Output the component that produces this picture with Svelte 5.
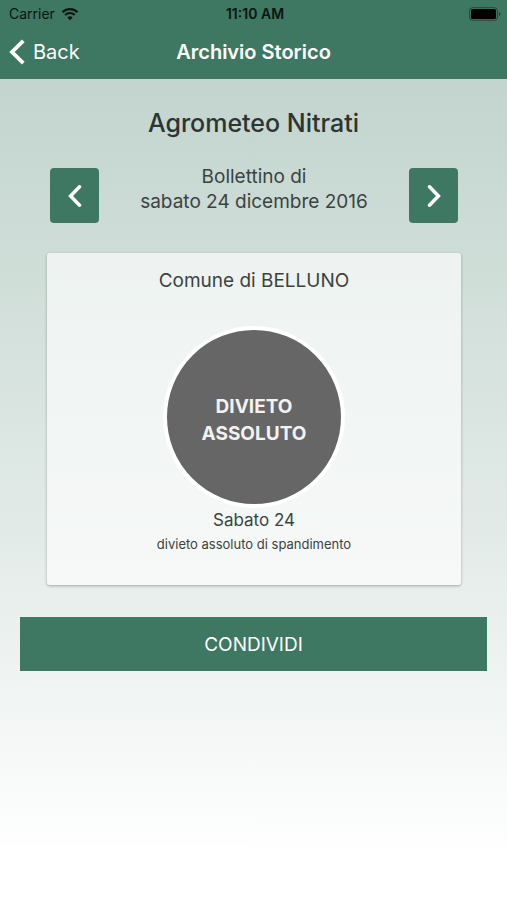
<script lang="ts">
interface Bulletin {
	date: string;
	town: string;
	status: string[];
	day: string;
	note: string;
}

const bulletin: Bulletin = {
	date: 'sabato 24 dicembre 2016',
	town: 'BELLUNO',
	status: ['DIVIETO', 'ASSOLUTO'],
	day: 'Sabato 24',
	note: 'divieto assoluto di spandimento'
};
</script>

<div class="screen">
	<header>
		<div class="status-bar">
			<span class="carrier">
				Carrier
				<svg width="18" height="14" viewBox="0 0 18 14" fill="none" aria-hidden="true">
					<path d="M1.5 5.2a10.6 10.6 0 0 1 15 0" stroke="currentColor" stroke-width="2.3" />
					<path d="M4.2 8a6.8 6.8 0 0 1 9.6 0" stroke="currentColor" stroke-width="2.2" />
					<path d="M9 13.2 6.4 10.5a3.7 3.7 0 0 1 5.2 0z" fill="currentColor" />
				</svg>
			</span>
			<span class="clock">11:10 AM</span>
			<svg class="battery" width="32" height="14" viewBox="0 0 32 14" aria-hidden="true">
				<rect x=".6" y=".7" width="27.8" height="12.6" rx="3" fill="none" stroke="#000" stroke-opacity=".4" />
				<rect x="2" y="2" width="25" height="10" rx="1.6" fill="#000" />
				<path d="M30 5v4q1.3-.7 1.3-2T30 5z" fill="#000" fill-opacity=".5" />
			</svg>
		</div>
		<nav>
			<a class="back" href="#back">
				<svg width="16" height="26" viewBox="0 0 16 26" fill="none" aria-hidden="true">
					<path d="M14.3 1.8 3 13l11.3 11.2" stroke="currentColor" stroke-width="3.8" />
				</svg>
				Back
			</a>
			<span class="nav-title">Archivio Storico</span>
		</nav>
	</header>

	<main>
		<h1>Agrometeo Nitrati</h1>

		<div class="picker">
			<button class="arrow" aria-label="Giorno precedente">
				<svg width="14" height="22" viewBox="0 0 14 22" fill="none" aria-hidden="true">
					<path d="M11.5 1.8 2.6 11l8.9 9.2" stroke="currentColor" stroke-width="3.5" stroke-linecap="round" />
				</svg>
			</button>
			<p>Bollettino di<br />{bulletin.date}</p>
			<button class="arrow" aria-label="Giorno successivo">
				<svg width="14" height="22" viewBox="0 0 14 22" fill="none" aria-hidden="true">
					<path d="m2.5 1.8 8.9 9.2-8.9 9.2" stroke="currentColor" stroke-width="3.5" stroke-linecap="round" />
				</svg>
			</button>
		</div>

		<section class="card">
			<h2>Comune di {bulletin.town}</h2>
			<div class="circle">
				{#each bulletin.status as line (line)}
					<span>{line}</span>
				{/each}
			</div>
			<p class="day">{bulletin.day}</p>
			<p class="note">{bulletin.note}</p>
		</section>

		<button class="share">CONDIVIDI</button>
	</main>
</div>

<style>
	:global(body) {
		margin: 0;
	}
	.screen {
		--green: #3e7762;
		box-sizing: border-box;
		min-height: 100vh;
		background: linear-gradient(#becfc9, #cddcd6 26%, #e3ebe8 60%, #fff 95%);
		color: #3b4341;
		font-family: Inter, Roboto, sans-serif;
	}
	header {
		background: var(--green);
	}
	.status-bar {
		display: grid;
		grid-template-columns: 1fr auto 1fr;
		align-items: center;
		height: 27px;
		padding: 0 6px 0 9px;
		color: #0b1511;
		font-size: 14px;
	}
	.carrier {
		display: flex;
		align-items: center;
		gap: 6px;
	}
	.clock {
		font-weight: 600;
	}
	.battery {
		justify-self: end;
	}
	nav {
		display: grid;
		grid-template-columns: 1fr auto 1fr;
		align-items: center;
		height: 50px;
		padding: 0 9px 2px;
		color: #fff;
		font-size: 20px;
	}
	.back {
		display: flex;
		align-items: center;
		gap: 8px;
		color: inherit;
		text-decoration: none;
	}
	.nav-title {
		font-weight: 600;
	}
	main {
		padding: 27px 20px;
		text-align: center;
	}
	h1 {
		margin: 0 0 28px;
		color: #2c3533;
		font-size: 25px;
		font-weight: 500;
		line-height: 34px;
	}
	.picker {
		display: flex;
		justify-content: space-between;
		margin: 0 29px 30px 30px;
	}
	.picker p {
		margin: -4px 0 0;
		font-size: 19px;
		line-height: 25px;
	}
	.arrow {
		display: grid;
		place-items: center;
		width: 49px;
		height: 55px;
		padding: 0;
		border: 0;
		border-radius: 4px;
		background: var(--green);
		color: #fff;
	}
	.card {
		margin: 0 26px 32px 27px;
		padding: 14px 12px 28px;
		border-radius: 3px;
		background: rgb(255 255 255 / 64%);
		box-shadow: 0 1px 3px rgb(0 0 0 / 30%);
	}
	h2 {
		margin: 0 0 31px;
		font-size: 19px;
		font-weight: 400;
		line-height: 28px;
	}
	.circle {
		box-sizing: border-box;
		display: flex;
		flex-direction: column;
		justify-content: center;
		width: 182px;
		height: 182px;
		margin: 0 auto;
		padding-top: 5px;
		border: 4px solid #fff;
		border-radius: 50%;
		background: #666;
		color: #f2f2f2;
		font-size: 19px;
		font-weight: 700;
		line-height: 27px;
	}
	.day {
		margin: 0;
		font-size: 17px;
		line-height: 24px;
	}
	.note {
		margin: 0;
		font-size: 13px;
		line-height: 25px;
	}
	.share {
		width: 100%;
		height: 54px;
		padding: 0;
		border: 0;
		background: var(--green);
		color: #fff;
		font: inherit;
		font-size: 19px;
	}
</style>
